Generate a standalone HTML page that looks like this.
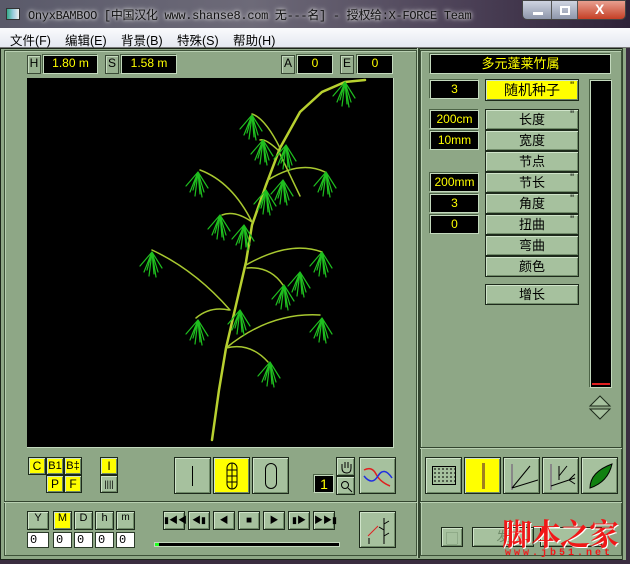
<!DOCTYPE html>
<html><head><meta charset="utf-8"><style>
*{margin:0;padding:0;box-sizing:border-box}
body{width:630px;height:564px;overflow:hidden;background:#3a2d40;font-family:"Liberation Sans","Noto Sans CJK SC",sans-serif;position:relative}
.a{position:absolute}
.title{left:0;top:0;width:630px;height:28px;background:linear-gradient(90deg,#5a5a6a 0%,#6d6a78 40%,#4a3f55 75%,#2e2238 100%)}
.ttext{left:28px;top:6px;font-family:"Liberation Mono","Noto Sans CJK SC",monospace;font-size:12px;color:#111;letter-spacing:-0.3px;text-shadow:0 0 6px #ddd,0 0 3px #eee}
.menu{left:0;top:28px;width:630px;height:20px;background:linear-gradient(#fafbfd,#e4e8f0);border-bottom:1px solid #777;font-size:12.5px;color:#000}
.menu span{position:absolute;top:2px}
.bg{background:#8ea786}
.btn{position:absolute;background:#a6c19e;border:1px solid #1d2a1b;box-shadow:inset 1px 1px 0 #d0e4ca,inset -1px -1px 0 #6f8a68;font-size:13px;text-align:center;color:#000}
.y{background:#ffff00}
.blk{position:absolute;background:#000;border:1px solid #c3d9bd;box-shadow:-1px -1px 0 #4c6346;color:#ffff00;font-size:12px;text-align:center}
.lbl{position:absolute;background:#98b190;border:1px solid #3a4a36;box-shadow:inset 1px 1px 0 #c5dabe;font-size:12px;text-align:center;color:#000}
.wb{position:absolute;background:#fff;border:1px solid #2a3a28;font-size:12px;padding-left:2px;font-family:"Liberation Mono",monospace;line-height:14px}
</style></head><body>
<div class="a title"></div>
<div class="a" style="left:6px;top:8px;width:14px;height:12px;background:linear-gradient(90deg,#3a8 0,#9cd 50%,#eee 100%);border:1px solid #333"></div>
<div class="a ttext">OnyxBAMBOO [中国汉化 www.shanse8.com 无---名] - 授权给:X-FORCE Team</div>
<div class="a" style="left:522px;top:0;width:104px;height:20px;border-radius:0 0 5px 5px;overflow:hidden;border:1px solid #444">
<div class="a" style="left:0;top:0;width:29px;height:19px;background:linear-gradient(#cfd4e0,#8a93a8);border-right:1px solid #555"></div>
<div class="a" style="left:10px;top:11px;width:10px;height:3px;background:#fff"></div>
<div class="a" style="left:29px;top:0;width:26px;height:19px;background:linear-gradient(#cfd4e0,#8a93a8);border-right:1px solid #555"></div>
<div class="a" style="left:37px;top:5px;width:10px;height:9px;border:2px solid #fff"></div>
<div class="a" style="left:55px;top:0;width:49px;height:19px;background:linear-gradient(#e8a090,#c43a20)"></div>
<div class="a" style="left:72px;top:0;color:#fff;font-weight:bold;font-size:14px">X</div>
</div>
<div class="a menu"><span style="left:10px">文件(F)</span><span style="left:65px">编辑(E)</span><span style="left:121px">背景(B)</span><span style="left:177px">特殊(S)</span><span style="left:233px">帮助(H)</span></div>
<div class="a bg" style="left:0;top:48px;width:626px;height:512px;border:1px solid #1a2418"></div>
<div class="a" style="left:4px;top:50px;width:413px;height:506px;border:1px solid #3e5239;box-shadow:inset 1px 1px 0 #b8cfb1"></div>
<div class="a" style="left:417px;top:48px;width:3px;height:510px;background:#33452f;border-left:1px solid #b8cfb1"></div>
<div class="a" style="left:420px;top:50px;width:202px;height:506px;border:1px solid #3e5239;box-shadow:inset 1px 1px 0 #b8cfb1"></div>
<div class="a" style="left:622px;top:48px;width:4px;height:512px;background:#8ea786;border-left:1px solid #33452f"></div>
<!-- top row -->
<div class="lbl" style="left:27px;top:55px;width:14px;height:19px">H</div>
<div class="blk" style="left:43px;top:55px;width:55px;height:19px">1.80 m</div>
<div class="lbl" style="left:105px;top:55px;width:14px;height:19px">S</div>
<div class="blk" style="left:121px;top:55px;width:56px;height:19px">1.58 m</div>
<div class="lbl" style="left:281px;top:55px;width:14px;height:19px">A</div>
<div class="blk" style="left:297px;top:55px;width:36px;height:19px">0</div>
<div class="lbl" style="left:340px;top:55px;width:14px;height:19px">E</div>
<div class="blk" style="left:357px;top:55px;width:36px;height:19px">0</div>
<!-- canvas -->
<div class="a" style="left:27px;top:78px;width:367px;height:370px;background:#000;border-right:1px solid #c3d9bd;border-bottom:1px solid #c3d9bd"></div>
<svg class="a" style="left:0;top:0" width="630" height="564" fill="none" stroke-linecap="round">
<defs><path id="lf" d="M0 0 l-8 20 M0 0 l-3 24 M0 0 l2 22 M0 0 l6 20 M0 0 l10 16 M0 0 l-12 14 M0 0 l-5 18 M0 0 l4 25"/></defs>
<g stroke="#b8d030" stroke-width="2.5"><path d="M212 440 L219 390 L226 348 L236 305 L246 262 L252 225 L266 185 L280 148 L300 112 L322 92 L345 82 L365 80"/></g>
<g stroke="#a8c830" stroke-width="1.5">
<path d="M226 348 Q250 342 268 362"/><path d="M226 348 Q270 312 320 315"/><path d="M230 310 Q195 270 152 250"/><path d="M229 310 Q210 306 196 318"/>
<path d="M246 265 Q290 240 322 252"/><path d="M247 268 Q270 266 283 285"/><path d="M252 222 Q235 210 222 215"/><path d="M252 222 Q232 182 200 170"/>
<path d="M268 180 Q300 160 325 172"/><path d="M278 150 Q265 138 260 140"/><path d="M280 148 Q265 118 252 114"/><path d="M278 150 Q290 175 300 196"/></g>
<g stroke="#1fbf1f" stroke-width="1.2">
<use href="#lf" x="270" y="362"/><use href="#lf" x="322" y="318"/><use href="#lf" x="152" y="252"/><use href="#lf" x="198" y="320"/>
<use href="#lf" x="322" y="252"/><use href="#lf" x="284" y="285"/><use href="#lf" x="220" y="215"/><use href="#lf" x="244" y="225"/>
<use href="#lf" x="198" y="172"/><use href="#lf" x="326" y="172"/><use href="#lf" x="283" y="180"/><use href="#lf" x="263" y="140"/>
<use href="#lf" x="252" y="115"/><use href="#lf" x="286" y="145"/><use href="#lf" x="345" y="82"/><use href="#lf" x="240" y="310"/><use href="#lf" x="300" y="272"/><use href="#lf" x="266" y="190"/>
</g>
</svg>
<!-- bottom left -->
<div class="btn y" style="left:28px;top:457px;width:18px;height:18px;font-size:12px;line-height:16px">C</div>
<div class="btn y" style="left:46px;top:457px;width:18px;height:18px;font-size:11px;line-height:16px">B1</div>
<div class="btn y" style="left:64px;top:457px;width:18px;height:18px;font-size:11px;line-height:16px">B‡</div>
<div class="btn y" style="left:46px;top:475px;width:18px;height:18px;font-size:12px;line-height:16px">P</div>
<div class="btn y" style="left:64px;top:475px;width:18px;height:18px;font-size:12px;line-height:16px">F</div>
<div class="btn y" style="left:100px;top:457px;width:18px;height:18px;font-size:12px;line-height:16px">I</div>
<div class="btn" style="left:100px;top:475px;width:18px;height:18px;font-size:9px;line-height:16px">||||</div>
<div class="btn" style="left:174px;top:457px;width:37px;height:37px"><div class="a" style="left:17px;top:8px;width:1px;height:20px;background:#000"></div></div>
<div class="btn y" style="left:213px;top:457px;width:37px;height:37px"><svg class="a" style="left:10px;top:4px" width="16" height="28"><rect x="3" y="1" width="10" height="26" rx="5" stroke="#000" fill="none"/><path d="M3 8h10M3 14h10M3 20h10M8 1v26" stroke="#000"/></svg></div>
<div class="btn" style="left:252px;top:457px;width:37px;height:37px"><div class="a" style="left:12px;top:5px;width:12px;height:26px;border:1px solid #000;border-radius:6px"></div></div>
<div class="blk" style="left:314px;top:475px;width:20px;height:18px;font-size:14px;line-height:16px">1</div>
<div class="btn" style="left:336px;top:457px;width:19px;height:19px"><svg class="a" style="left:3px;top:2px" width="13" height="14"><path d="M2 8V4M5 8V2M8 8V2M11 8V4M2 8Q2 13 7 13Q11 13 11 8" stroke="#000" fill="none"/></svg></div>
<div class="btn" style="left:336px;top:476px;width:19px;height:19px"><svg class="a" style="left:3px;top:3px" width="13" height="13"><circle cx="5" cy="5" r="3.5" stroke="#000" fill="none"/><path d="M8 8l4 4" stroke="#000"/></svg></div>
<div class="btn" style="left:359px;top:457px;width:37px;height:37px"><svg class="a" style="left:2px;top:6px" width="32" height="26"><path d="M2 6 Q10 2 14 10 T28 22" stroke="#e02020" stroke-width="1.5" fill="none"/><path d="M2 12 Q10 22 16 12 T30 14" stroke="#2030e0" stroke-width="1.5" fill="none"/></svg></div>
<div class="a" style="left:4px;top:501px;width:413px;height:2px;background:#33452f;border-bottom:1px solid #b8cfb1"></div>
<div class="btn" style="left:27px;top:511px;width:22px;height:19px;font-size:11px">Y</div>
<div class="btn y" style="left:53px;top:511px;width:19px;height:19px;font-size:11px">M</div>
<div class="btn" style="left:74px;top:511px;width:19px;height:19px;font-size:11px">D</div>
<div class="btn" style="left:95px;top:511px;width:19px;height:19px;font-size:11px">h</div>
<div class="btn" style="left:116px;top:511px;width:19px;height:19px;font-size:10px">m</div>
<div class="wb" style="left:27px;top:532px;width:22px;height:16px">0</div>
<div class="wb" style="left:53px;top:532px;width:19px;height:16px">0</div>
<div class="wb" style="left:74px;top:532px;width:19px;height:16px">0</div>
<div class="wb" style="left:95px;top:532px;width:19px;height:16px">0</div>
<div class="wb" style="left:116px;top:532px;width:19px;height:16px">0</div>
<div class="btn" style="left:163px;top:511px;width:22px;height:19px;font-size:9px;line-height:17px">▮◀◀</div>
<div class="btn" style="left:188px;top:511px;width:22px;height:19px;font-size:9px;line-height:17px">◀▮</div>
<div class="btn" style="left:213px;top:511px;width:22px;height:19px;font-size:9px;line-height:17px">◀</div>
<div class="btn" style="left:238px;top:511px;width:22px;height:19px;font-size:10px;line-height:17px">■</div>
<div class="btn" style="left:263px;top:511px;width:22px;height:19px;font-size:9px;line-height:17px">▶</div>
<div class="btn" style="left:288px;top:511px;width:22px;height:19px;font-size:9px;line-height:17px">▮▶</div>
<div class="btn" style="left:313px;top:511px;width:22px;height:19px;font-size:9px;line-height:17px">▶▶▮</div>
<div class="a" style="left:154px;top:542px;width:186px;height:5px;background:#000;border:1px solid #c3d9bd"></div>
<div class="a" style="left:155px;top:543px;width:4px;height:3px;background:#20ff20"></div>
<div class="btn" style="left:359px;top:511px;width:37px;height:37px"><svg class="a" style="left:4px;top:4px" width="28" height="28"><path d="M4 20 L14 10" stroke="#e02020"/><path d="M20 2v26M20 8l5-3M20 14l-5-3M20 20l5-3M5 22v6" stroke="#000"/></svg></div>
<!-- right panel -->
<div class="blk" style="left:430px;top:54px;width:181px;height:20px;font-size:13px;line-height:18px">多元蓬莱竹属</div>
<div class="blk" style="left:430px;top:80px;width:49px;height:19px;line-height:17px">3</div>
<div class="btn y" style="left:485px;top:79px;width:94px;height:22px;font-size:14px;line-height:20px">随机种子<span style="position:absolute;right:4px;top:-4px;font-size:11px">"</span></div>
<div class="blk" style="left:430px;top:110px;width:49px;height:19px;line-height:17px">200cm</div>
<div class="blk" style="left:430px;top:131px;width:49px;height:19px;line-height:17px">10mm</div>
<div class="blk" style="left:430px;top:173px;width:49px;height:19px;line-height:17px">200mm</div>
<div class="blk" style="left:430px;top:194px;width:49px;height:19px;line-height:17px">3</div>
<div class="blk" style="left:430px;top:215px;width:49px;height:19px;line-height:17px">0</div>
<div class="btn" style="left:485px;top:109px;width:94px;height:21px;line-height:19px">长度<span style="position:absolute;right:4px;top:-4px;font-size:11px">"</span></div>
<div class="btn" style="left:485px;top:130px;width:94px;height:21px;line-height:19px">宽度</div>
<div class="btn" style="left:485px;top:151px;width:94px;height:21px;line-height:19px">节点</div>
<div class="btn" style="left:485px;top:172px;width:94px;height:21px;line-height:19px">节长<span style="position:absolute;right:4px;top:-4px;font-size:11px">"</span></div>
<div class="btn" style="left:485px;top:193px;width:94px;height:21px;line-height:19px">角度<span style="position:absolute;right:4px;top:-4px;font-size:11px">"</span></div>
<div class="btn" style="left:485px;top:214px;width:94px;height:21px;line-height:19px">扭曲<span style="position:absolute;right:4px;top:-4px;font-size:11px">"</span></div>
<div class="btn" style="left:485px;top:235px;width:94px;height:21px;line-height:19px">弯曲</div>
<div class="btn" style="left:485px;top:256px;width:94px;height:21px;line-height:19px">颜色</div>
<div class="btn" style="left:485px;top:284px;width:94px;height:21px;line-height:19px">增长</div>
<div class="a" style="left:590px;top:80px;width:22px;height:308px;background:#000;border:1px solid #c3d9bd;box-shadow:-1px -1px 0 #4c6346"></div>
<div class="a" style="left:592px;top:383px;width:18px;height:2px;background:#e02020"></div>
<svg class="a" style="left:588px;top:395px" width="24" height="26"><path d="M12 1 L22 11 H2 Z M2 14 H22 L12 24 Z" fill="#a6c19e" stroke="#1d2a1b"/></svg>
<div class="a" style="left:420px;top:447px;width:202px;height:2px;background:#33452f;border-bottom:1px solid #b8cfb1"></div>
<div class="btn" style="left:425px;top:457px;width:37px;height:37px"><div class="a" style="left:6px;top:8px;width:24px;height:19px;border:1px solid #000;background:radial-gradient(#000 0.6px,transparent 1px) 0 0/4px 4px"></div></div>
<div class="btn y" style="left:464px;top:457px;width:37px;height:37px"><div class="a" style="left:17px;top:5px;width:3px;height:26px;background:#a08020"></div></div>
<div class="btn" style="left:503px;top:457px;width:37px;height:37px"><svg class="a" style="left:4px;top:4px" width="30" height="30"><path d="M4 2v26" stroke="#888" stroke-width="2"/><path d="M4 26 L22 4 M4 26 L30 18" stroke="#000"/></svg></div>
<div class="btn" style="left:542px;top:457px;width:37px;height:37px"><svg class="a" style="left:4px;top:4px" width="30" height="30"><path d="M4 2v26" stroke="#888" stroke-width="2"/><path d="M4 24 L28 16 M12 4v14 M12 14 L20 4 M22 18 l6-6 M22 18 l6 4" stroke="#000"/></svg></div>
<div class="btn" style="left:581px;top:457px;width:37px;height:37px"><svg class="a" style="left:4px;top:4px" width="30" height="30"><path d="M4 26 Q4 10 26 2 Q22 20 4 26Z" fill="#108010" stroke="#000"/></svg></div>
<div class="a" style="left:420px;top:501px;width:202px;height:2px;background:#33452f;border-bottom:1px solid #b8cfb1"></div>
<div class="btn" style="left:441px;top:527px;width:22px;height:20px;color:#6f8a68">▢</div>
<div class="btn" style="left:472px;top:527px;width:62px;height:20px;color:#6f8a68;line-height:18px">发</div>
<div class="btn" style="left:540px;top:527px;width:62px;height:20px;color:#6f8a68"></div>
<div class="a" style="left:502px;top:510px;font-size:30px;color:#f01818;font-family:'Noto Serif CJK SC',serif;font-weight:bold;letter-spacing:-1px;text-shadow:1px 1px 0 #fff">脚本之家</div>
<div class="a" style="left:505px;top:548px;font-size:10px;color:#f01818;font-family:'Liberation Mono',monospace;letter-spacing:3px;font-weight:bold">www.jb51.net</div>
</body></html>
